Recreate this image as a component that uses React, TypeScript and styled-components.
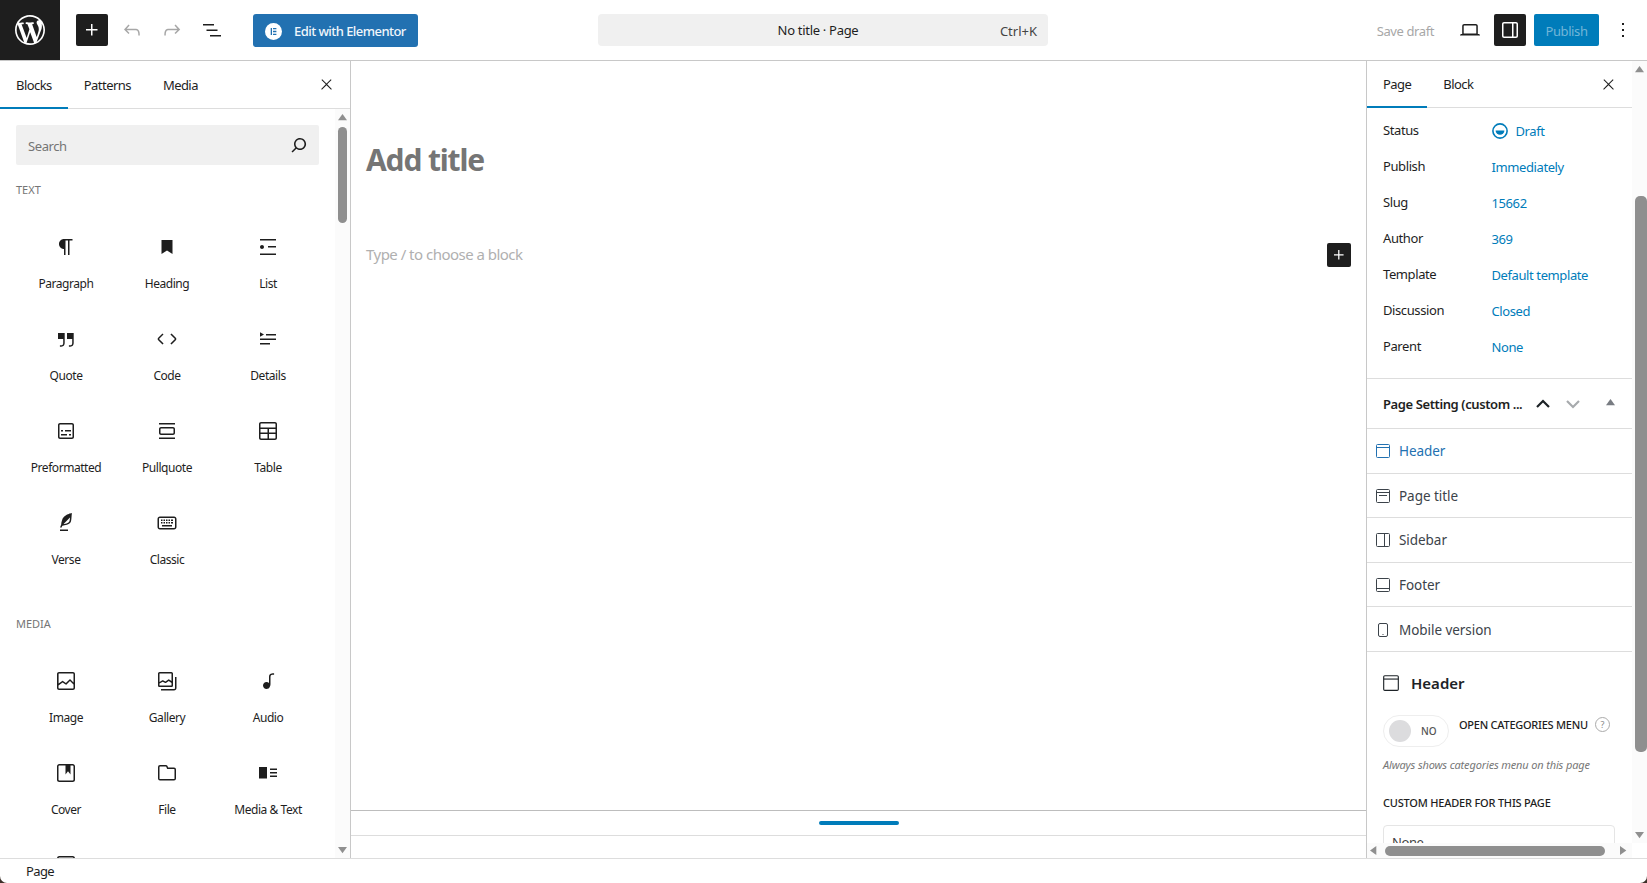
import styled, { createGlobalStyle } from 'styled-components'

const GlobalStyle = createGlobalStyle`
  html, body {
    margin: 0;
    height: 100%;
    overflow: hidden;
    background: #3d3029;
  }

  * {
    box-sizing: border-box;
  }
`

const ICONS: Record<string, string> = {
  plus: 'M11 12.5V17.5H12.5V12.5H17.5V11H12.5V6H11V11H6V12.5H11Z',
  undo: 'M18.3 11.7c-.6-.6-1.4-.9-2.3-.9H6.7l2.9-3.3-1.1-1-4.5 5L8.5 16l1-1-2.7-2.7H16c.5 0 .9.2 1.3.5 1 1 1 3.4 1 4.5v.3h1.5v-.2c0-1.5 0-4.3-1.5-5.7z',
  redo: 'M15.6 6.5l-1.1 1 2.9 3.3H8c-.9 0-1.7.3-2.3.9-1.4 1.5-1.4 4.2-1.4 5.6v.2h1.5v-.3c0-1.1 0-3.5 1-4.5.3-.3.7-.5 1.3-.5h9.2L14.5 15l1.1 1.1 4.6-4.6-4.6-5z',
  listView: 'M3 6h11v1.5H3V6Zm3.5 5.5h11V13h-11v-1.5ZM21 17H10v1.5h11V17Z',
  close: 'M13 11.8l6.1-6.3-1-1-6.1 6.2-6.1-6.2-1 1 6.1 6.3-6.5 6.7 1 1 6.5-6.6 6.5 6.6 1-1z',
  search: 'M13 5c-3.3 0-6 2.7-6 6 0 1.4.5 2.7 1.3 3.7l-3.8 3.8 1.1 1.1 3.8-3.8c1 .8 2.3 1.3 3.7 1.3 3.3 0 6-2.7 6-6S16.3 5 13 5zm0 10.5c-2.5 0-4.5-2-4.5-4.5s2-4.5 4.5-4.5 4.5 2 4.5 4.5-2 4.5-4.5 4.5z',
  desktop: 'M20.5 16h-.7V8c0-1.1-.9-2-2-2H6.2c-1.1 0-2 .9-2 2v8h-.7c-.8 0-1.5.7-1.5 1.5h20c0-.8-.7-1.5-1.5-1.5zM5.7 8c0-.3.2-.5.5-.5h11.6c.3 0 .5.2.5.5v7.6H5.7V8z',
  drawer: 'M18 4H6c-1.1 0-2 .9-2 2v12c0 1.1.9 2 2 2h12c1.1 0 2-.9 2-2V6c0-1.1-.9-2-2-2zm-4 14.5H6c-.3 0-.5-.2-.5-.5V6c0-.3.2-.5.5-.5h8v13zm4.5-.5c0 .3-.2.5-.5.5h-2.5v-13H18c.3 0 .5.2.5.5v12z',
  more: 'M13 19h-2v-2h2v2zm0-6h-2v-2h2v2zm0-6h-2V5h2v2z',
  paragraph: 'm9.99609 14v-.2251l.00391.0001v6.225h1.5v-14.5h2.5v14.5h1.5v-14.5h3v-1.5h-8.50391c-2.76142 0-5 2.23858-5 5 0 2.7614 2.23858 5 5 5z',
  heading: 'M6.5 5h11v14l-5.5-3.6L6.5 19z',
  list: 'M4 4v1.5h16V4H4zm8 8.5h8V11h-8v1.5zM4 20h16v-1.5H4V20zm4-8c0-1.1-.9-2-2-2s-2 .9-2 2 .9 2 2 2 2-.9 2-2z',
  quote: 'M13 6v6h5.2v4c0 .8-.2 1.4-.5 1.7-.6.6-1.6.6-2.5.5h-.3v1.5h.5c1 0 2.3-.1 3.3-1 .6-.6 1-1.6 1-2.8V6H13zm-9 6h5.2v4c0 .8-.2 1.4-.5 1.7-.6.6-1.6.6-2.5.5h-.3v1.5h.5c1 0 2.3-.1 3.3-1 .6-.6 1-1.6 1-2.8V6H4v6z',
  code: 'M20.8 10.7l-4.3-4.3-1.1 1.1 4.3 4.3c.1.1.1.3 0 .4l-4.3 4.3 1.1 1.1 4.3-4.3c.7-.8.7-1.9 0-2.6zM4.2 11.8l4.3-4.3-1-1-4.3 4.3c-.7.7-.7 1.8 0 2.5l4.3 4.3 1.1-1.1-4.3-4.3c-.2-.1-.2-.3-.1-.4z',
  details: 'M4 16h10v1.5H4V16Zm0-4.5h16V13H4v-1.5ZM10 7h10v1.5H10V7ZM4 5.25v4.5L8 7.5 4 5.25Z',
  preformatted: 'M18 4H6c-1.1 0-2 .9-2 2v12c0 1.1.9 2 2 2h12c1.1 0 2-.9 2-2V6c0-1.1-.9-2-2-2zm.5 14c0 .3-.2.5-.5.5H6c-.3 0-.5-.2-.5-.5V6c0-.3.2-.5.5-.5h12c.3 0 .5.2.5.5v12zM7 16.5h6V15H7v1.5zm4-4h6V11h-6v1.5zM9 11H7v1.5h2V11zm6 5.5h2V15h-2v1.5z',
  pullquote: 'M18 8H6c-1.1 0-2 .9-2 2v4c0 1.1.9 2 2 2h12c1.1 0 2-.9 2-2v-4c0-1.1-.9-2-2-2zm.5 6c0 .3-.2.5-.5.5H6c-.3 0-.5-.2-.5-.5v-4c0-.3.2-.5.5-.5h12c.3 0 .5.2.5.5v4zM4 4v1.5h16V4H4zm0 16h16v-1.5H4V20z',
  table: 'M19 3H5c-1.1 0-2 .9-2 2v14c0 1.1.9 2 2 2h14c1.1 0 2-.9 2-2V5c0-1.1-.9-2-2-2zM5 4.5h14c.3 0 .5.2.5.5v3.5h-15V5c0-.3.2-.5.5-.5zm8 5.5h6.5v3.5H13V10zm-1.5 3.5h-7V10h7v3.5zm-7 5.5v-4h7v4.5H5c-.3 0-.5-.2-.5-.5zm14.5.5h-6V15h6.5v4c0 .3-.2.5-.5.5z',
  verse: 'M17.8 2l-.9.3c-.1 0-3.6 1-5.2 2.1C10 5.5 9.3 6.5 8.9 7.1c-.6.9-1.7 4.7-1.7 6.3l-.9 2.3c-.2.4 0 .8.4 1 .1 0 .2.1.3.1.3 0 .6-.2.7-.5l.6-1.5c.3 0 .7-.1 1.2-.2.7-.1 1.4-.3 2.2-.5.8-.2 1.6-.5 2.4-.8.7-.3 1.4-.7 1.9-1.2s.8-1.2 1-1.9c.2-.7.3-1.6.4-2.4.1-.8.1-1.7.2-2.5 0-.8.1-1.5.2-2.1V2zm-1.9 5.6c-.1.8-.2 1.5-.3 2.1-.2.6-.4 1-.6 1.3-.3.3-.8.6-1.4.9-.7.3-1.4.5-2.2.8-.6.2-1.3.3-1.8.4L15 7.5c.3-.3.6-.7 1-1.1 0 .4 0 .8-.1 1.2zM6 20h8v-1.5H6V20z',
  classic: 'M19 5.5H5c-1.5 0-2.5 1-2.5 2.5v8c0 1.5 1 2.5 2.5 2.5h14c1.5 0 2.5-1 2.5-2.5V8c0-1.5-1-2.5-2.5-2.5zM20 16c0 .6-.4 1-1 1H5c-.6 0-1-.4-1-1V8c0-.6.4-1 1-1h14c.6 0 1 .4 1 1v8zM6 8.5h1.5V10H6V8.5zm2.5 0H10V10H8.5V8.5zm2.5 0h1.5V10H11V8.5zm2.5 0H15V10h-1.5V8.5zm2.5 0h2V10h-2V8.5zM6 11h1.5v1.5H6V11zm2.5 0H10v1.5H8.5V11zm2.5 0h1.5v1.5H11V11zm2.5 0H15v1.5h-1.5V11zm2.5 0h2v1.5h-2V11zM7 14h10v1.5H7V14z',
  image: 'M19 3H5c-1.1 0-2 .9-2 2v14c0 1.1.9 2 2 2h14c1.1 0 2-.9 2-2V5c0-1.1-.9-2-2-2zM5 4.5h14c.3 0 .5.2.5.5v8.4l-3-2.9c-.3-.3-.8-.3-1 0L11.9 14 9 12c-.3-.2-.6-.2-.8 0l-3.6 2.6V5c-.1-.3.1-.5.4-.5zm14 15H5c-.3 0-.5-.2-.5-.5v-2.4l4.1-3 3 1.9c.3.2.7.2.9-.1L16 12l3.5 3.4V19c0 .3-.2.5-.5.5z',
  gallery: 'M16.375 4.5H4.625a.125.125 0 0 0-.125.125v8.254l2.859-1.54a.75.75 0 0 1 .68-.016l2.384 1.142 2.89-2.074a.75.75 0 0 1 .874 0l2.313 1.66V4.625a.125.125 0 0 0-.125-.125Zm.125 9.398-2.75-1.975-2.813 2.02a.75.75 0 0 1-.76.067l-2.444-1.17L4.5 14.583v1.792c0 .069.056.125.125.125h11.75a.125.125 0 0 0 .125-.125v-2.477ZM4.625 3C3.728 3 3 3.728 3 4.625v11.75C3 17.273 3.728 18 4.625 18h11.75c.898 0 1.625-.727 1.625-1.625V4.625C18 3.728 17.273 3 16.375 3H4.625ZM20 8v11c0 .69-.31 1-.999 1H6v1.5h13.001c1.52 0 2.499-.982 2.499-2.5V8H20Z',
  audio: 'M17.7 4.3c-1.2 0-2.8 0-3.8 1-.6.6-.9 1.5-.9 2.6V14c-.6-.6-1.5-1-2.5-1C8.6 13 7 14.6 7 16.5S8.6 20 10.5 20c1.5 0 2.8-1 3.3-2.3.5-.8.7-1.8.7-2.5V7.9c0-.7.2-1.2.5-1.6.6-.6 1.8-.6 2.8-.6h.3V4.3h-.4z',
  cover: 'M18.7 3H5.3C4 3 3 4 3 5.3v13.4C3 20 4 21 5.3 21h13.4c1.3 0 2.3-1 2.3-2.3V5.3C21 4 20 3 18.7 3zm.8 15.7c0 .4-.4.8-.8.8H5.3c-.4 0-.8-.4-.8-.8V5.3c0-.4.4-.8.8-.8h6.2v8.9l2.5-3.1 2.5 3.1V4.5h2.2c.4 0 .8.4.8.8v13.4z',
  file: 'M12.848 8a1 1 0 0 1-.914-.594l-.723-1.63a.5.5 0 0 0-.447-.276H5a.5.5 0 0 0-.5.5v11.5a.5.5 0 0 0 .5.5h14a.5.5 0 0 0 .5-.5v-9A.5.5 0 0 0 19 8h-6.152Zm.612-1.5a.5.5 0 0 1-.462-.31l-.445-1.084A2 2 0 0 0 10.763 4H5a2 2 0 0 0-2 2v11.5a2 2 0 0 0 2 2h14a2 2 0 0 0 2-2v-9a2 2 0 0 0-2-2h-5.54Z',
  mediaText: 'M3 6v11.5h8V6H3Zm11 3h7V7.5h-7V9Zm7 3.5h-7V11h7v1.5ZM14 16h7v-1.5h-7V16Z',
  video: 'M18.7 3H5.3C4 3 3 4 3 5.3v13.4C3 20 4 21 5.3 21h13.4c1.3 0 2.3-1 2.3-2.3V5.3C21 4 20 3 18.7 3zm.8 15.7c0 .4-.4.8-.8.8H5.3c-.4 0-.8-.4-.8-.8V5.3c0-.4.4-.8.8-.8h13.4c.4 0 .8.4.8.8v13.4zM10 15l5-3-5-3v6z',
}

const WP_LOGO = 'M20 10c0-5.51-4.49-10-10-10C4.48 0 0 4.49 0 10c0 5.52 4.48 10 10 10 5.51 0 10-4.48 10-10zM7.78 15.37L4.37 6.22c.55-.02 1.17-.08 1.17-.08.5-.06.44-1.13-.06-1.11 0 0-1.45.11-2.37.11-.18 0-.37 0-.58-.01C4.12 2.69 6.87 1.11 10 1.11c2.33 0 4.45.87 6.05 2.34-.68-.11-1.65.39-1.65 1.58 0 .74.45 1.36.9 2.1.35.61.55 1.36.55 2.46 0 1.49-1.4 5-1.4 5l-3.03-8.37c.54-.02.82-.17.82-.17.5-.05.44-1.25-.06-1.22 0 0-1.44.12-2.38.12-.87 0-2.33-.12-2.33-.12-.5-.03-.56 1.2-.06 1.22l.92.08 1.26 3.41zM17.41 10c.24-.64.74-1.87.43-4.25.7 1.29 1.05 2.71 1.05 4.25 0 3.29-1.73 6.24-4.4 7.78.97-2.59 1.94-5.2 2.92-7.78zM6.1 18.09C3.12 16.65 1.11 13.53 1.11 10c0-1.3.23-2.48.72-3.59C3.25 10.3 4.67 14.2 6.1 18.09zm4.03-6.63l2.58 6.98c-.86.29-1.76.45-2.71.45-.79 0-1.57-.11-2.29-.33.81-2.38 1.62-4.74 2.42-7.1z'

const TEXT_BLOCKS = [
  ['paragraph', 'Paragraph'], ['heading', 'Heading'], ['list', 'List'],
  ['quote', 'Quote'], ['code', 'Code'], ['details', 'Details'],
  ['preformatted', 'Preformatted'], ['pullquote', 'Pullquote'], ['table', 'Table'],
  ['verse', 'Verse'], ['classic', 'Classic'],
]

const MEDIA_BLOCKS = [
  ['image', 'Image'], ['gallery', 'Gallery'], ['audio', 'Audio'],
  ['cover', 'Cover'], ['file', 'File'], ['mediaText', 'Media & Text'],
  ['video', ''],
]

const SUMMARY = [
  ['Publish', 'Immediately'],
  ['Slug', '15662'],
  ['Author', '369'],
  ['Template', 'Default template'],
  ['Discussion', 'Closed'],
  ['Parent', 'None'],
]

const Page = styled.div`
  display: flex;
  flex-direction: column;
  width: 1647px;
  height: 883px;
  overflow: hidden;
  background: #fff;
  border-radius: 0 0 7px 7px;
  font-family: "Noto Sans", "Open Sans", sans-serif;
  letter-spacing: -0.4px;
  color: #1e1e1e;
`

const Header = styled.header`
  display: flex;
  align-items: center;
  flex: none;
  height: 61px;
  border-bottom: 1px solid #c8c8c8;
`

const LogoBox = styled.div`
  display: flex;
  align-items: center;
  justify-content: center;
  width: 60px;
  height: 60px;
  background: #1e1e1e;
`

const LeftTools = styled.div`
  display: flex;
  align-items: center;
  width: 538px;
  padding-left: 16px;
`

const SquareButton = styled.div<{ $dark?: boolean; $left?: number }>`
  display: flex;
  align-items: center;
  justify-content: center;
  width: 32px;
  height: 32px;
  margin-left: ${props => props.$left ?? 0}px;
  border-radius: 2px;
  background: ${props => props.$dark ? '#1e1e1e' : 'transparent'};
  color: ${props => props.$dark ? '#fff' : '#1e1e1e'};
`

const IconButton = styled.div<{ $muted?: boolean; $left?: number }>`
  display: flex;
  align-items: center;
  justify-content: center;
  width: 24px;
  height: 24px;
  margin-left: ${props => props.$left ?? 0}px;
  color: ${props => props.$muted ? '#a7a7a7' : '#1e1e1e'};
`

const ElementorButton = styled.div`
  display: flex;
  align-items: center;
  width: 165px;
  height: 33px;
  margin-left: 29px;
  padding: 2px 0 0 12px;
  gap: 12px;
  border-radius: 3px;
  background: #2271b1;
  color: #f0f6fb;
  font-size: 13px;
  font-weight: 500;
  letter-spacing: -0.55px;
  white-space: nowrap;
`

const CommandBar = styled.div`
  position: relative;
  display: flex;
  align-items: center;
  justify-content: center;
  width: 450px;
  height: 32px;
  padding-right: 10px;
  border-radius: 4px;
  background: #f0f0f0;
  font-size: 13px;
  letter-spacing: -0.3px;
`

const Shortcut = styled.span`
  position: absolute;
  right: 11px;
  top: 8px;
  color: #444;
  letter-spacing: 0;
`

const RightTools = styled.div`
  display: flex;
  align-items: center;
  margin-left: auto;
  padding-right: 12px;
`

const SaveDraft = styled.span`
  margin: 2px 24px 0 0;
  color: #a7a7a7;
  font-size: 13px;
`

const PublishButton = styled.div`
  display: flex;
  align-items: center;
  justify-content: center;
  width: 65px;
  height: 32px;
  margin: 0 12px 0 8px;
  padding-top: 1px;
  border-radius: 2px;
  background: #007cba;
  color: rgba(255, 255, 255, 0.45);
  font-size: 13px;
`

const Body = styled.main`
  display: flex;
  flex: 1;
  min-height: 0;
`

const Inserter = styled.aside`
  display: flex;
  flex-direction: column;
  flex: none;
  width: 351px;
  border-right: 1px solid #c8c8c8;
`

const Tabs = styled.div<{ $height: number }>`
  position: relative;
  display: flex;
  flex: none;
  height: ${props => props.$height}px;
  border-bottom: 1px solid #ddd;
`

const Tab = styled.div<{ $active?: boolean; $lift?: number }>`
  display: flex;
  align-items: center;
  height: calc(100% + 1px);
  padding: 0 16px ${props => props.$lift ?? 0}px;
  font-size: 13px;
  letter-spacing: -0.55px;
  color: #1e1e1e;
  box-shadow: ${props => props.$active ? 'inset 0 -2px 0 #007cba' : 'none'};
`

const TabClose = styled.div<{ $right: number }>`
  display: flex;
  align-items: center;
  margin-left: auto;
  margin-right: ${props => props.$right}px;
`

const InserterBody = styled.div`
  display: flex;
  flex: 1;
  min-height: 0;
`

const BlockList = styled.div`
  flex: 1;
  min-width: 0;
  overflow: hidden;
  padding: 16px 16px 0;
`

const SearchBox = styled.div`
  display: flex;
  align-items: center;
  justify-content: space-between;
  height: 40px;
  padding: 0 8px 0 12px;
  border-radius: 2px;
  background: #f0f0f0;
  color: #757575;
  font-size: 13px;

  span {
    margin-top: 2px;
  }

  svg {
    color: #1e1e1e;
  }
`

const SectionTitle = styled.div<{ $top: number }>`
  margin-top: ${props => props.$top}px;
  color: #757575;
  font-size: 11px;
  letter-spacing: 0;
  line-height: 16px;
`

const BlockGrid = styled.div`
  display: grid;
  grid-template-columns: repeat(3, 101px);
  margin: 25px -16px 0 -0.5px;
`

const BlockItem = styled.div`
  display: flex;
  flex-direction: column;
  align-items: center;
  height: 92px;
  padding-top: 12px;
  font-size: 12px;
  letter-spacing: -0.45px;
  line-height: 16px;
`

const BlockLabel = styled.span`
  margin-top: 17px;
`

const ScrollTrack = styled.div<{ $inset: number; $width: number }>`
  display: flex;
  flex-direction: column;
  align-items: flex-start;
  flex: none;
  width: 15px;
  padding-left: ${props => props.$inset}px;
  background: #fbfbfb;

  & > div:nth-child(2) {
    width: ${props => props.$width}px;
  }
`

const ArrowSlot = styled.div<{ $bottom?: boolean }>`
  display: flex;
  flex: none;
  height: 18px;
  margin-top: ${props => props.$bottom ? 'auto' : '0'};
  padding-top: ${props => props.$bottom ? 7 : 5}px;
  color: #8f8f8f;
`

const ScrollThumb = styled.div<{ $height: number; $top?: number }>`
  flex: none;
  height: ${props => props.$height}px;
  margin-top: ${props => props.$top ?? 0}px;
  border-radius: 5px;
  background: #8f8f8f;
`

const Canvas = styled.section`
  display: flex;
  flex-direction: column;
  flex: 1;
  min-width: 0;
`

const EditorArea = styled.div`
  flex: 1;
  padding: 75px 15px 0;
  border-bottom: 1px solid #bdbdbd;
`

const PostTitle = styled.h1`
  margin: 0;
  color: #757575;
  font-size: 30px;
  font-weight: 700;
  letter-spacing: -1.15px;
  line-height: 48px;
`

const BlockPrompt = styled.div`
  display: flex;
  align-items: center;
  justify-content: space-between;
  margin-top: 57px;
  color: #b0b0b0;
  font-size: 15px;
  letter-spacing: -0.52px;
`

const SmallPlus = styled.div`
  display: flex;
  align-items: center;
  justify-content: center;
  width: 24px;
  height: 24px;
  margin-top: 2px;
  border-radius: 2px;
  background: #1e1e1e;
  color: #fff;
`

const ResizeBar = styled.div`
  display: flex;
  align-items: center;
  justify-content: center;
  flex: none;
  height: 25px;
  border-bottom: 1px solid #ddd;
`

const ResizeHandle = styled.div`
  width: 80px;
  height: 4px;
  border-radius: 2px;
  background: #007cba;
`

const CanvasFoot = styled.div`
  flex: none;
  height: 22px;
`

const Settings = styled.aside`
  display: grid;
  grid-template-columns: 265px 15px;
  grid-template-rows: 782px 15px;
  flex: none;
  width: 281px;
  border-left: 1px solid #c8c8c8;
`

const SettingsContent = styled.div`
  overflow: hidden;
`

const SummaryList = styled.div`
  padding: 4px 0 14px;
  border-bottom: 1px solid #ddd;
`

const SummaryRow = styled.div`
  display: grid;
  grid-template-columns: 108.5px 1fr;
  align-items: center;
  height: 36px;
  padding-left: 16px;
  font-size: 13px;
`

const SummaryValue = styled.span`
  display: flex;
  align-items: center;
  gap: 8px;
  margin-top: 1px;
  color: #007cba;
`

const MetaBoxHead = styled.div`
  display: flex;
  align-items: center;
  height: 50px;
  padding-left: 16px;
  border-bottom: 1px solid #ddd;
  font-size: 13px;
  font-weight: 600;
`

const MetaBoxTitle = styled.span`
  width: 152px;
  white-space: nowrap;
`

const MetaChevron = styled.div<{ $color: string; $left?: number }>`
  display: flex;
  width: 30px;
  padding-left: ${props => props.$left ?? 0}px;
  color: ${props => props.$color};
`

const OptionTab = styled.div<{ $active?: boolean }>`
  display: flex;
  align-items: center;
  gap: 8px;
  height: 44.6px;
  padding: 1px 0 0 8px;
  border-bottom: 1px solid #ddd;
  font-size: 13.5px;
  letter-spacing: -0.05px;
  color: ${props => props.$active ? '#2271b1' : '#3c434a'};
`

const OptionPanel = styled.div`
  padding: 21px 16px 0;
`

const OptionHeading = styled.div`
  display: flex;
  align-items: center;
  gap: 11px;
  margin-left: -1px;
  font-size: 15px;
  font-weight: 600;
  letter-spacing: 0;
  line-height: 20px;
  color: #1d2327;
`

const ToggleRow = styled.div`
  display: flex;
  align-items: flex-start;
  margin-top: 22px;
`

const Toggle = styled.div`
  display: flex;
  align-items: center;
  width: 66px;
  height: 32px;
  padding-left: 5px;
  gap: 10px;
  border: 1px solid #eee;
  border-radius: 16px;
  color: #555;
  font-size: 10px;
  font-weight: 500;
  letter-spacing: 0;
`

const ToggleKnob = styled.div`
  width: 22px;
  height: 22px;
  border-radius: 50%;
  background: #dcdcde;
`

const ToggleLabel = styled.span`
  margin: 2px 0 0 10px;
  font-size: 11px;
  font-weight: 500;
  letter-spacing: -0.26px;
  line-height: 16px;
  white-space: nowrap;
`

const HelpMark = styled.span`
  display: flex;
  align-items: center;
  justify-content: center;
  width: 15px;
  height: 15px;
  margin: 2px 0 0 7px;
  border: 1px solid #aaa;
  border-radius: 50%;
  color: #888;
  font-size: 9px;
`

const Hint = styled.div`
  margin-top: 10px;
  color: #777;
  font-size: 11px;
  font-style: italic;
  letter-spacing: -0.15px;
  line-height: 16px;
  white-space: nowrap;
`

const FieldLabel = styled.div`
  margin-top: 22px;
  font-size: 11px;
  font-weight: 500;
  letter-spacing: -0.2px;
  line-height: 16px;
  white-space: nowrap;
`

const SelectBox = styled.div`
  display: flex;
  align-items: flex-start;
  justify-content: space-between;
  width: 232px;
  height: 36px;
  margin-top: 14px;
  padding: 7px 8px 0 8px;
  border: 1px solid #e5e5e5;
  border-radius: 4px;
  color: #444;
  font-size: 13px;

  svg {
    margin-top: 6px;
  }
`

const HorizontalTrack = styled.div`
  display: flex;
  align-items: center;
  padding-left: 3px;
  background: #fbfbfb;
  color: #8f8f8f;
`

const HorizontalThumb = styled.div`
  width: 220px;
  height: 10px;
  margin: 0 15px 0 6px;
  border-radius: 5px;
  background: #8f8f8f;
`

const Corner = styled.div`
  background: #fff;
`

const StatusBar = styled.footer`
  display: flex;
  align-items: center;
  flex: none;
  height: 25px;
  padding-left: 26px;
  border-top: 1px solid #ddd;
  font-size: 13px;
  letter-spacing: -0.6px;
`

const Icon = ({ name, size = 24 }: { name: string; size?: number }) => (
  <svg width={size} height={size} viewBox="0 0 24 24" fill="currentColor">
    <path d={ICONS[name]} fillRule="evenodd" />
  </svg>
)

const Triangle = ({ dir }: { dir: 'up' | 'down' | 'left' | 'right' }) => {
  const points = {
    up: '0,7 5,0 10,7',
    down: '0,0 10,0 5,7',
    left: '7,0 7,10 0,5',
    right: '0,0 0,10 7,5',
  }
  return (
    <svg width="9" height="9" viewBox="0 0 10 10" fill="currentColor">
      <polygon points={points[dir]} />
    </svg>
  )
}

const OutlineIcon = ({ kind, size = 16 }: { kind: string; size?: number }) => (
  <svg width={size} height={size} viewBox="0 0 16 16" fill="none" stroke="currentColor" strokeWidth="1">
    {kind === 'phone' ? (
      <>
        <rect x="3.5" y="1.5" width="9" height="13" rx="1.5" />
        <path d="M7.5 12.5h1" />
      </>
    ) : (
      <rect x="1.5" y="1.5" width="13" height="13" rx="1" />
    )}
    {kind === 'header' && <path d="M1.5 4.5h13" />}
    {kind === 'title' && <path d="M1.5 4.5h13M4 7.5h8" />}
    {kind === 'sidebar' && <path d="M9.5 1.5v13" />}
    {kind === 'footer' && <path d="M1.5 11.5h13" />}
  </svg>
)

const BlockSet = ({ items }: { items: string[][] }) => (
  <BlockGrid>
    {items.map(([icon, label]) => (
      <BlockItem key={icon}>
        <Icon name={icon} />
        {label && <BlockLabel>{label}</BlockLabel>}
      </BlockItem>
    ))}
  </BlockGrid>
)

export default function App() {
  return (
    <>
      <GlobalStyle />
      <Page>
        <Header>
          <LogoBox>
            <svg width="30" height="30" viewBox="0 0 20 20" fill="#fff">
              <path d={WP_LOGO} />
            </svg>
          </LogoBox>
          <LeftTools>
            <SquareButton $dark><Icon name="plus" /></SquareButton>
            <IconButton $muted $left={12}><Icon name="undo" /></IconButton>
            <IconButton $muted $left={16}><Icon name="redo" /></IconButton>
            <IconButton $left={16}><Icon name="listView" /></IconButton>
            <ElementorButton>
              <svg width="17" height="17" viewBox="0 0 17 17">
                <circle cx="8.5" cy="8.5" r="8.5" fill="#fff" />
                <path d="M5.7 5h1.3v7H5.7zM8 5h3.4v1.3H8zM8 7.85h3.4v1.3H8zM8 10.7h3.4V12H8z" fill="#2271b1" />
              </svg>
              Edit with Elementor
            </ElementorButton>
          </LeftTools>
          <CommandBar>
            No title · Page
            <Shortcut>Ctrl+K</Shortcut>
          </CommandBar>
          <RightTools>
            <SaveDraft>Save draft</SaveDraft>
            <IconButton><Icon name="desktop" /></IconButton>
            <SquareButton $dark $left={12}><Icon name="drawer" /></SquareButton>
            <PublishButton>Publish</PublishButton>
            <IconButton><Icon name="more" /></IconButton>
          </RightTools>
        </Header>
        <Body>
          <Inserter>
            <Tabs $height={48}>
              <Tab $active>Blocks</Tab>
              <Tab>Patterns</Tab>
              <Tab>Media</Tab>
              <TabClose $right={15}><Icon name="close" size={17} /></TabClose>
            </Tabs>
            <InserterBody>
              <BlockList>
                <SearchBox>
                  <span>Search</span>
                  <Icon name="search" />
                </SearchBox>
                <SectionTitle $top={17}>TEXT</SectionTitle>
                <BlockSet items={TEXT_BLOCKS} />
                <SectionTitle $top={25}>MEDIA</SectionTitle>
                <BlockSet items={MEDIA_BLOCKS} />
              </BlockList>
              <ScrollTrack $inset={3} $width={9}>
                <ArrowSlot><Triangle dir="up" /></ArrowSlot>
                <ScrollThumb $height={96} />
                <ArrowSlot $bottom><Triangle dir="down" /></ArrowSlot>
              </ScrollTrack>
            </InserterBody>
          </Inserter>
          <Canvas>
            <EditorArea>
              <PostTitle>Add title</PostTitle>
              <BlockPrompt>
                Type / to choose a block
                <SmallPlus><Icon name="plus" size={20} /></SmallPlus>
              </BlockPrompt>
            </EditorArea>
            <ResizeBar><ResizeHandle /></ResizeBar>
            <CanvasFoot />
          </Canvas>
          <Settings>
            <SettingsContent>
              <Tabs $height={47}>
                <Tab $active $lift={2}>Page</Tab>
                <Tab $lift={2}>Block</Tab>
                <TabClose $right={15}><Icon name="close" size={17} /></TabClose>
              </Tabs>
              <SummaryList>
                <SummaryRow>
                  <span>Status</span>
                  <SummaryValue>
                    <svg width="16" height="16" viewBox="0 0 16 16">
                      <circle cx="8" cy="8" r="7.1" fill="none" stroke="#007cba" strokeWidth="1.6" />
                      <path d="M3.6 7.4h8.8a4.4 4.4 0 0 1-8.8 0z" fill="#007cba" />
                    </svg>
                    Draft
                  </SummaryValue>
                </SummaryRow>
                {SUMMARY.map(([label, value]) => (
                  <SummaryRow key={label}>
                    <span>{label}</span>
                    <SummaryValue>{value}</SummaryValue>
                  </SummaryRow>
                ))}
              </SummaryList>
              <MetaBoxHead>
                <MetaBoxTitle>Page Setting (custom ...</MetaBoxTitle>
                <MetaChevron $color="#1d2327">
                  <svg width="16" height="10" viewBox="0 0 16 10" fill="none" stroke="currentColor" strokeWidth="2.2">
                    <path d="M2 8l6-6 6 6" />
                  </svg>
                </MetaChevron>
                <MetaChevron $color="#a7aaad">
                  <svg width="16" height="10" viewBox="0 0 16 10" fill="none" stroke="currentColor" strokeWidth="2.2">
                    <path d="M2 2l6 6 6-6" />
                  </svg>
                </MetaChevron>
                <MetaChevron $color="#787c82" $left={11}><Triangle dir="up" /></MetaChevron>
              </MetaBoxHead>
              <OptionTab $active><OutlineIcon kind="header" />Header</OptionTab>
              <OptionTab><OutlineIcon kind="title" />Page title</OptionTab>
              <OptionTab><OutlineIcon kind="sidebar" />Sidebar</OptionTab>
              <OptionTab><OutlineIcon kind="footer" />Footer</OptionTab>
              <OptionTab><OutlineIcon kind="phone" />Mobile version</OptionTab>
              <OptionPanel>
                <OptionHeading><OutlineIcon kind="header" size={18} />Header</OptionHeading>
                <ToggleRow>
                  <Toggle><ToggleKnob />NO</Toggle>
                  <ToggleLabel>OPEN CATEGORIES MENU</ToggleLabel>
                  <HelpMark>?</HelpMark>
                </ToggleRow>
                <Hint>Always shows categories menu on this page</Hint>
                <FieldLabel>CUSTOM HEADER FOR THIS PAGE</FieldLabel>
                <SelectBox>
                  None
                  <svg width="12" height="12" viewBox="0 0 12 12" fill="none" stroke="#555" strokeWidth="1">
                    <path d="M1 4l5 5 5-5" />
                  </svg>
                </SelectBox>
              </OptionPanel>
            </SettingsContent>
            <ScrollTrack $inset={3} $width={12}>
              <ArrowSlot><Triangle dir="up" /></ArrowSlot>
              <ScrollThumb $height={556} $top={117} />
              <ArrowSlot $bottom><Triangle dir="down" /></ArrowSlot>
            </ScrollTrack>
            <HorizontalTrack>
              <Triangle dir="left" />
              <HorizontalThumb />
              <Triangle dir="right" />
            </HorizontalTrack>
            <Corner />
          </Settings>
        </Body>
        <StatusBar>Page</StatusBar>
      </Page>
    </>
  )
}
